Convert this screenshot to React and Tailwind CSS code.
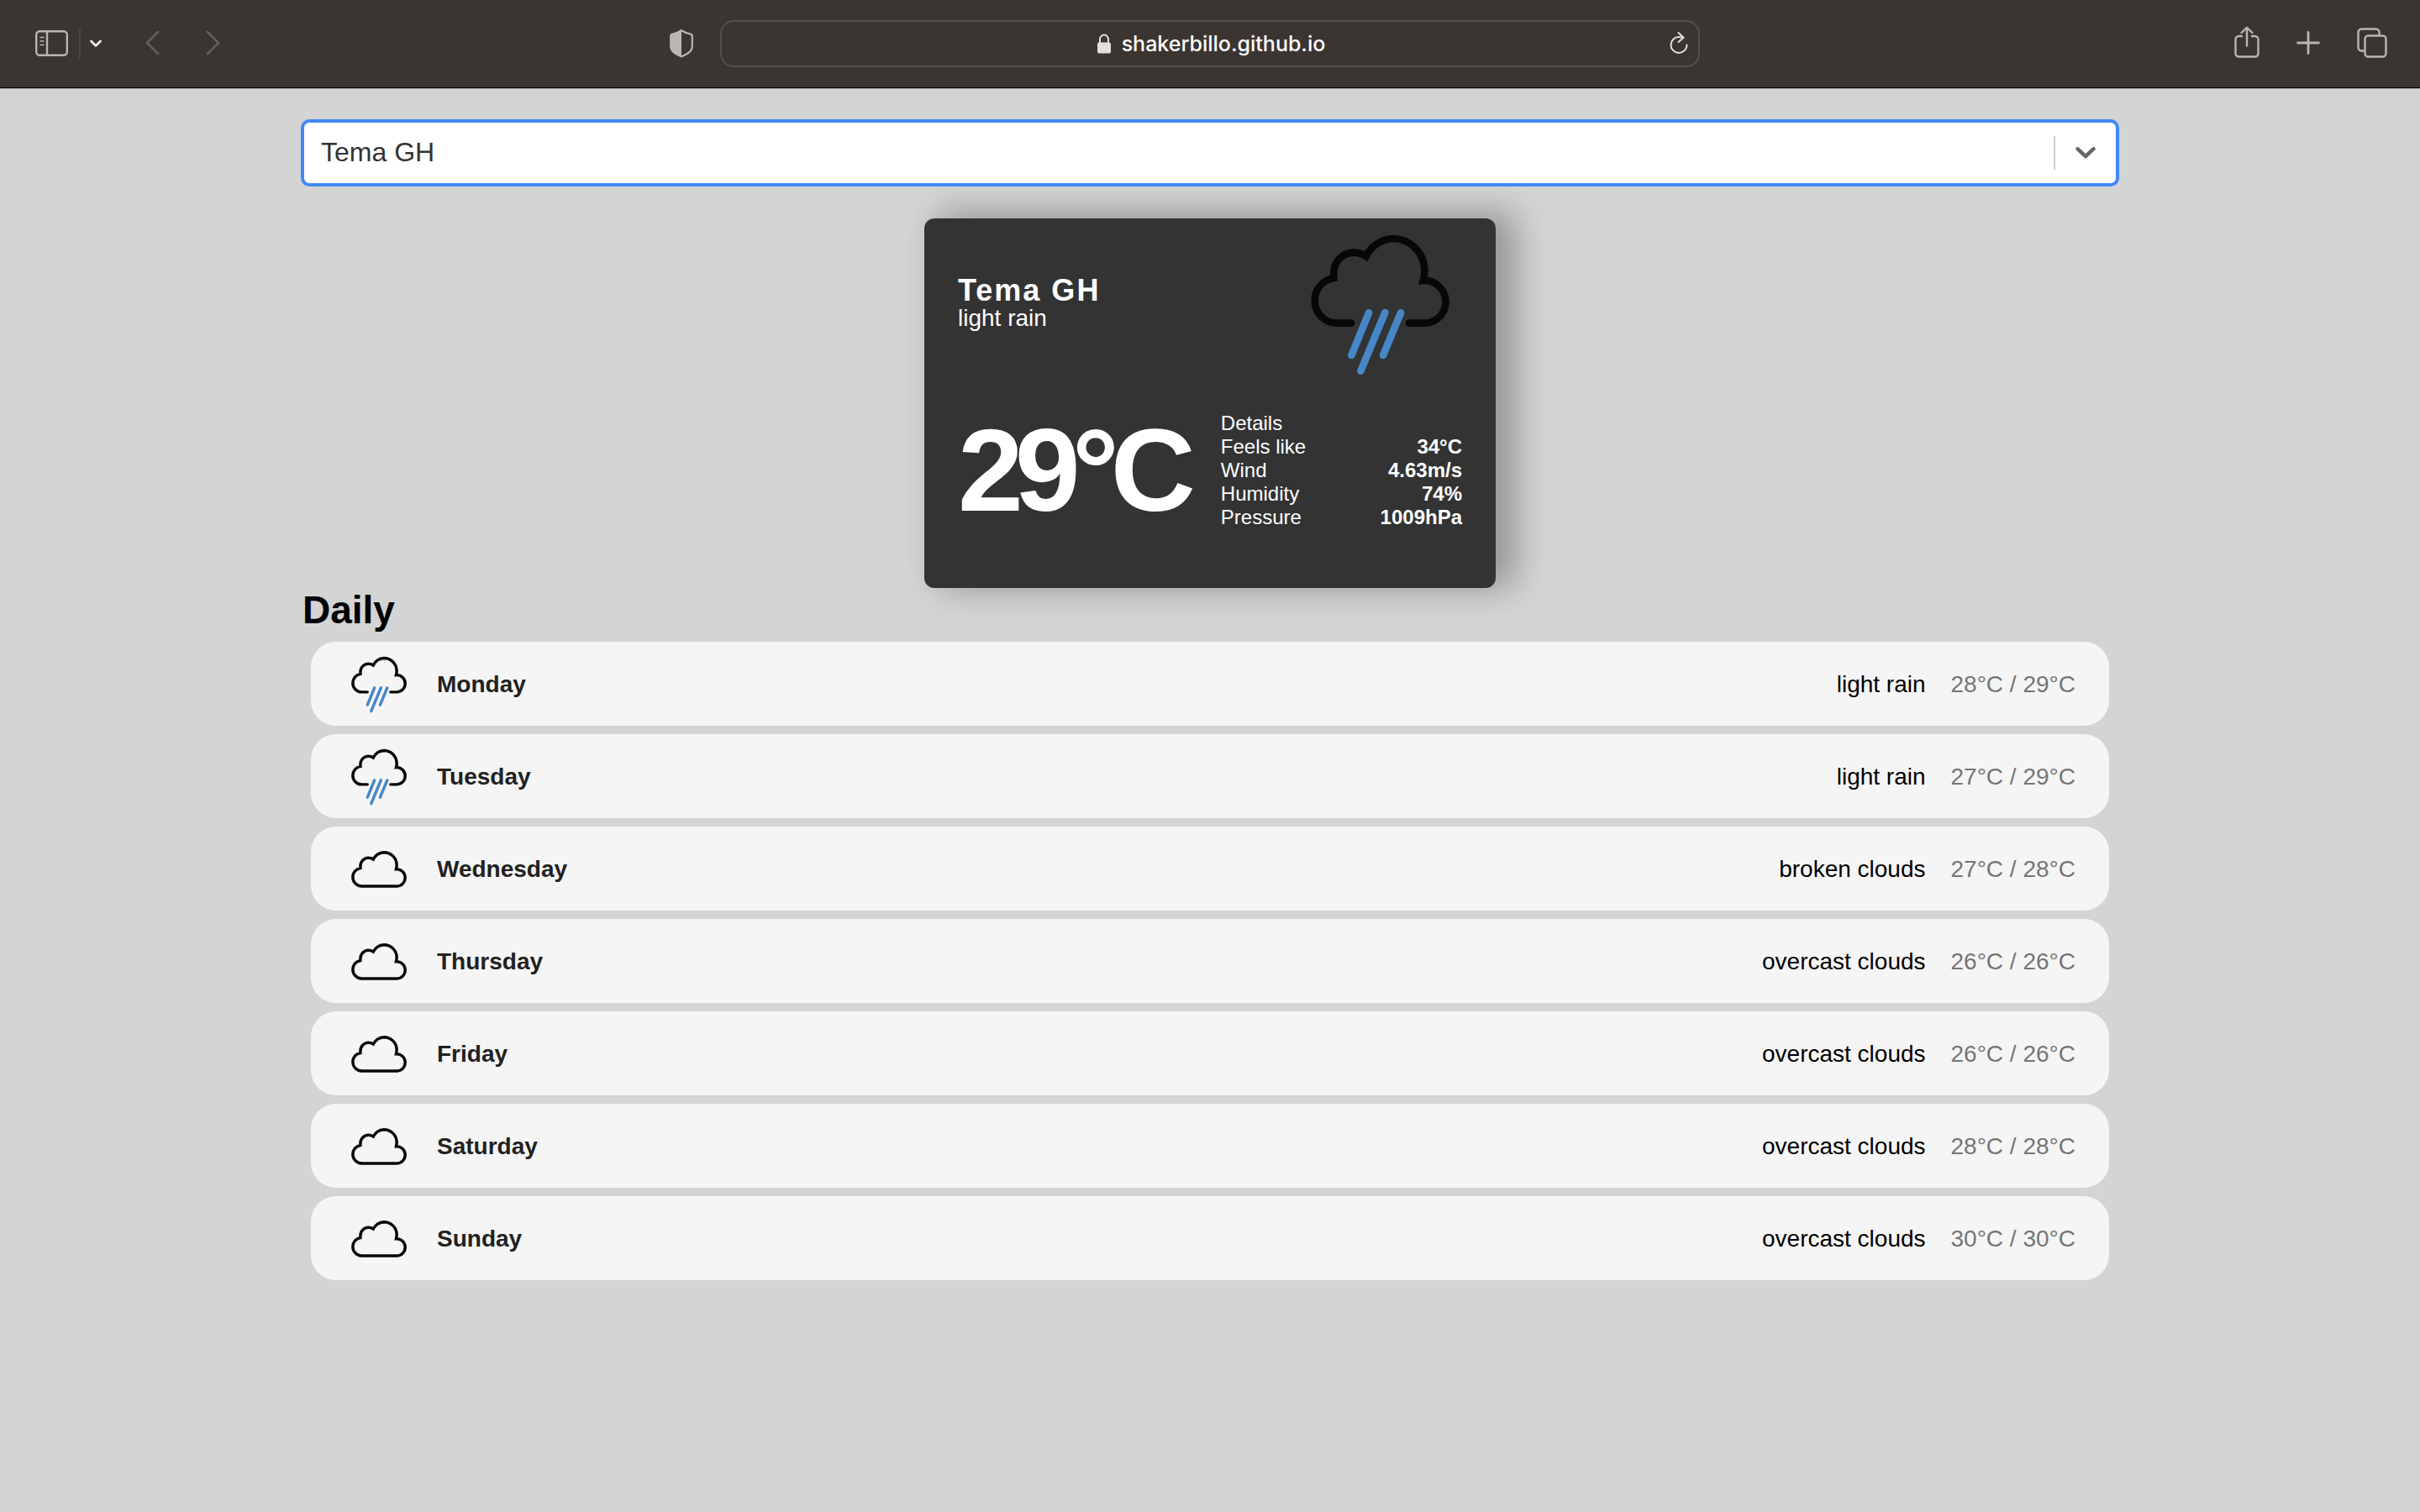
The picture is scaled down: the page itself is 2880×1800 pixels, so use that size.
const CLOUD_BODY =
  "H153A80 80 0 0 1 74 294A80 80 0 0 1 142 213V194A71 72 0 0 1 212 122Q237 122 257 135A114 114 0 0 1 352 72A114 114 0 0 1 466 186Q466 205 461 222A76 76 0 0 1 470 374";
const CLOUD_OPEN = "M204 374" + CLOUD_BODY + "H411";
const CLOUD_CLOSED = "M204 374" + CLOUD_BODY + "Z";

const days = [
  { day: "Monday", icon: "rain", text: "light rain", temp: "28°C / 29°C" },
  { day: "Tuesday", icon: "rain", text: "light rain", temp: "27°C / 29°C" },
  { day: "Wednesday", icon: "cloud", text: "broken clouds", temp: "27°C / 28°C" },
  { day: "Thursday", icon: "cloud", text: "overcast clouds", temp: "26°C / 26°C" },
  { day: "Friday", icon: "cloud", text: "overcast clouds", temp: "26°C / 26°C" },
  { day: "Saturday", icon: "cloud", text: "overcast clouds", temp: "28°C / 28°C" },
  { day: "Sunday", icon: "cloud", text: "overcast clouds", temp: "30°C / 30°C" },
];

const details = [
  ["Feels like", "34°C"],
  ["Wind", "4.63m/s"],
  ["Humidity", "74%"],
  ["Pressure", "1009hPa"],
];

function WeatherIcon({ kind, className }) {
  return (
    <svg viewBox="0 0 600 600" fill="none" strokeWidth="26" strokeLinecap="round" className={className} aria-hidden="true">
      {kind === "rain" ? (
        <>
          <path d={CLOUD_OPEN} stroke="#060808" strokeMiterlimit="10" />
          <path d="M267 337L205 489M325 336L238 545M381 337L318 489" stroke="#4687c7" />
        </>
      ) : (
        <path d={CLOUD_CLOSED} stroke="#060808" strokeMiterlimit="10" transform="translate(0 83)" />
      )}
    </svg>
  );
}

function Toolbar() {
  return (
    <header className="grid h-[105px] grid-cols-[1fr_auto_1fr] items-center border-b border-black bg-[#3b3532] text-[#bab5b2] shadow-[0_1px_0_#a8a6a5]">
      <div className="flex items-center justify-between pr-[46px] pl-[42px]">
        <div className="flex items-center">
          <button aria-label="Show sidebar">
            <svg width="39" height="32" viewBox="0 0 39 32" fill="none" stroke="currentColor" strokeWidth="2.4" className="block">
              <rect x="1.2" y="1.2" width="36.6" height="28.6" rx="4" />
              <path d="M14 1.2V29.8" />
              <path d="M6 8.500h4M6 13h4M6 17.500h4" strokeWidth="1.6" strokeLinecap="round" />
            </svg>
          </button>
          <span className="ml-[13px] h-9 w-0.5 bg-[#4d4744]" />
          <button aria-label="Sidebar menu" className="ml-[11px] text-[#ebe6e3]">
            <svg width="14" height="10" viewBox="0 0 14 10" fill="none" stroke="currentColor" strokeWidth="2.800" strokeLinecap="round" strokeLinejoin="round" className="block">
              <path d="M1.500 2L7 7.500L12.500 2" />
            </svg>
          </button>
          <button aria-label="Back" className="ml-[52px] text-[#645f5c]">
            <svg width="17" height="30" viewBox="0 0 17 30" fill="none" stroke="currentColor" strokeWidth="2.600" strokeLinecap="round" strokeLinejoin="round" className="block">
              <path d="M15 1L2 14L15 27" />
            </svg>
          </button>
          <button aria-label="Forward" className="ml-[55px] text-[#645f5c]">
            <svg width="17" height="30" viewBox="0 0 17 30" fill="none" stroke="currentColor" strokeWidth="2.600" strokeLinecap="round" strokeLinejoin="round" className="block">
              <path d="M2 1L15 14L2 27" />
            </svg>
          </button>
        </div>
        <button aria-label="Privacy report" className="-mr-[14px]">
          <svg width="28" height="34" viewBox="0 0 28 34" className="block">
            <path d="M14 1.200C10 3.700 5.500 5.200 2.500 5.900C1.300 6.200 1.200 6.700 1.200 7.700V19.700C1.200 26.700 8 29.700 14 32.400C20 29.700 26.800 26.700 26.800 19.700V7.700C26.800 6.700 26.700 6.200 25.500 5.900C22.500 5.200 18 3.700 14 1.200Z" fill="none" stroke="currentColor" strokeWidth="2.200" strokeLinejoin="round" />
            <path d="M14 1.200C10 3.700 5.500 5.200 2.500 5.900C1.300 6.200 1.200 6.700 1.200 7.700V19.700C1.200 26.700 8 29.700 14 32.400Z" fill="currentColor" />
          </svg>
        </button>
      </div>

      <div className="flex h-14 w-[40.5vw] items-center rounded-2xl border-2 border-[#544f4c] pr-3 pl-9 text-[#e2dfde]">
        <div className="flex flex-1 items-center justify-center gap-3">
          <svg width="18" height="24" viewBox="0 0 18 24" className="block">
            <path d="M4 12V7A5 5.500 0 0 1 14 7V12" fill="none" stroke="currentColor" strokeWidth="2" />
            <rect x="1" y="10.500" width="16" height="13" rx="2" fill="currentColor" />
          </svg>
          <span className="font-['Inter',sans-serif] text-[25px] leading-8 font-medium text-white">shakerbillo.github.io</span>
        </div>
        <button aria-label="Reload">
          <svg width="22" height="28" viewBox="0 0 22 28" fill="none" stroke="currentColor" strokeWidth="2" strokeLinecap="round" strokeLinejoin="round" className="block">
            <path d="M15 6.600C14 6.200 12.500 5.900 11 5.900A9.500 9.500 0 1 0 20.500 15.400" />
            <path d="M10.500 1L16.500 6.700L10.500 12" />
          </svg>
        </button>
      </div>

      <div className="flex items-center justify-end gap-11 pr-[39px]">
        <button aria-label="Share">
          <svg width="30" height="42" viewBox="0 0 30 42" fill="none" stroke="currentColor" strokeWidth="2.400" strokeLinecap="round" strokeLinejoin="round" className="block">
            <path d="M9 12H5.500A4 4 0 0 0 1.500 16V32.500A4 4 0 0 0 5.500 36.500H24.500A4 4 0 0 0 28.500 32.500V16A4 4 0 0 0 24.500 12H21" />
            <path d="M15 23.500V2M8.500 8L15 1.800L21.500 8" />
          </svg>
        </button>
        <button aria-label="New tab">
          <svg width="28" height="30" viewBox="0 0 28 30" fill="none" stroke="currentColor" strokeWidth="2.800" strokeLinecap="round" className="block">
            <path d="M14 1.500V26.500M1.500 14H26.500" />
          </svg>
        </button>
        <button aria-label="Tab overview">
          <svg width="36" height="38" viewBox="0 0 36 38" fill="none" stroke="currentColor" strokeWidth="2.400" className="block">
            <rect x="9.500" y="9.500" width="25" height="25" rx="4" />
            <path d="M9.500 27.500H5.500A4 4 0 0 1 1.500 23.500V5.500A4 4 0 0 1 5.500 1.500H22.500A4 4 0 0 1 26.500 5.500V9.500" />
          </svg>
        </button>
      </div>
    </header>
  );
}

function CitySearch() {
  return (
    <div className="flex items-center rounded-lg bg-white py-2 outline-4 -outline-offset-2 outline-[#4288f8]">
      <input
        aria-label="Search for city"
        defaultValue="Tema GH"
        className="min-w-0 flex-1 bg-transparent pb-0.5 pl-[22px] text-[32px] leading-[58px] text-[#333] outline-none"
      />
      <span className="h-10 w-0.5 bg-[#ccc]" />
      <button aria-label="Open city list" className="pr-[26px] pl-6 text-[#666]">
        <svg width="24" height="14" viewBox="0 0 24 14" fill="none" stroke="currentColor" strokeWidth="4.400" strokeLinecap="round" strokeLinejoin="round" className="block">
          <path d="M2.500 2.200L12 11.200L21.500 2.200" />
        </svg>
      </button>
    </div>
  );
}

function CurrentWeather() {
  return (
    <section className="mx-auto mt-10 w-[680px] rounded-xl bg-[#333] px-10 pb-10 text-white shadow-[20px_-4px_40px_4px_rgba(0,0,0,0.3)]">
      <div className="flex items-center justify-between">
        <div>
          <h1 className="text-[36px] leading-[38px] font-bold tracking-[2px]">Tema GH</h1>
          <p className="text-[28px] leading-7">light rain</p>
        </div>
        <WeatherIcon kind="rain" className="size-[200px]" />
      </div>
      <div className="flex h-[200px] items-center justify-between">
        <p className="text-[140px] leading-none font-bold tracking-[-10px]">29°C</p>
        <div className="flex-1 pl-10 text-[24px] leading-7">
          <p>Details</p>
          <dl>
            {details.map(([label, value]) => (
              <div key={label} className="flex justify-between">
                <dt>{label}</dt>
                <dd className="font-bold">{value}</dd>
              </div>
            ))}
          </dl>
        </div>
      </div>
    </section>
  );
}

export default function App() {
  return (
    <div className="min-h-screen bg-[#d4d4d4] pb-10 font-['Liberation_Sans',Arial,sans-serif]">
      <Toolbar />
      <main className="mx-auto mt-[39px] max-w-[2160px]">
        <CitySearch />
        <CurrentWeather />
        <section>
          <h2 className="text-[46px] leading-[52px] font-bold text-black">Daily</h2>
          <ul className="mx-2.5 mt-3 flex flex-col gap-2.5">
            {days.map(({ day, icon, text, temp }) => (
              <li key={day} className="flex items-center rounded-[30px] bg-[#f5f5f5] px-10 py-2.5 text-[28px] leading-8">
                <WeatherIcon kind={icon} className="size-20" />
                <span className="ml-[30px] flex-1 pt-0.5 font-bold text-[#212121]">{day}</span>
                <span className="mr-[30px] pt-0.5 text-black">{text}</span>
                <span className="pt-0.5 text-[#757575]">{temp}</span>
              </li>
            ))}
          </ul>
        </section>
      </main>
    </div>
  );
}
